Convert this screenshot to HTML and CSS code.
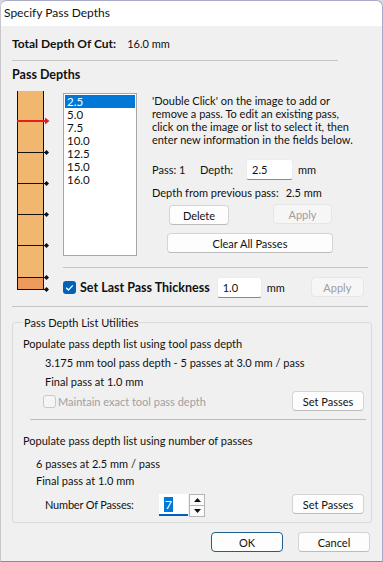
FILE: index.html
```html
<!DOCTYPE html>
<html lang="en">
  <head>
    <meta charset="UTF-8" />
    <title>Specify Pass Depths</title>
    <link rel="stylesheet" href="styles.css">
  </head>
  <body>
    <div class="window">
      <div class="titlebar">Specify Pass Depths</div>
      <div class="content">
        <div class="total">
          <span class="bold">Total Depth Of Cut:</span>
          <span class="total-val">16.0 mm</span>
        </div>
        <div class="rule rule-top"></div>
        <div class="heading bold">Pass Depths</div>

        <div class="passes">
          <svg class="ruler" width="40" height="202" viewBox="0 0 40 202">
            <rect x="5" y="1" width="27" height="186" fill="#f2b76e" />
            <rect x="5" y="187" width="27" height="12" fill="#ed9b5c" />
            <line x1="5.5" y1="1" x2="5.5" y2="200" stroke="#111" />
            <line x1="31.5" y1="1" x2="31.5" y2="200" stroke="#111" />
            <g stroke="#111">
              <line x1="5" y1="62.5" x2="34" y2="62.5" />
              <line x1="5" y1="93.5" x2="34" y2="93.5" />
              <line x1="5" y1="124.5" x2="34" y2="124.5" />
              <line x1="5" y1="155.5" x2="34" y2="155.5" />
              <line x1="5" y1="187.5" x2="34" y2="187.5" />
              <line x1="5" y1="199.5" x2="34" y2="199.5" />
            </g>
            <g fill="#111">
              <polygon points="32,62.5 34.5,60 37,62.5 34.5,65" />
              <polygon points="32,93.5 34.5,91 37,93.5 34.5,96" />
              <polygon points="32,124.5 34.5,122 37,124.5 34.5,127" />
              <polygon points="32,155.5 34.5,153 37,155.5 34.5,158" />
              <polygon points="32,187.5 34.5,185 37,187.5 34.5,190" />
              <polygon points="32,199.5 34.5,197 37,199.5 34.5,202" />
            </g>
            <rect x="5" y="30" width="29" height="2" fill="#e3201b" />
            <polygon points="33,27.5 37.5,31 33,34.5" fill="#e3201b" />
          </svg>

          <div class="pass-main">
            <div class="pass-top">
              <ul class="listbox">
                <li class="sel">2.5</li>
                <li>5.0</li>
                <li>7.5</li>
                <li>10.0</li>
                <li>12.5</li>
                <li>15.0</li>
                <li>16.0</li>
              </ul>
              <div class="editor">
                <p class="hint">
                  'Double Click' on the image to add or<br>
                  remove a pass. To edit an existing pass,<br>
                  click on the image or list to select it, then<br>
                  enter new information in the fields below.
                </p>
                <div class="pass-row">
                  <span class="pass-no">Pass: 1</span>
                  <span class="depth-lbl">Depth:</span>
                  <div class="field depth-field">2.5</div>
                  <span class="unit">mm</span>
                </div>
                <div class="prev-row">Depth from previous pass:<span class="prev-val">2.5 mm</span></div>
                <div class="btn-row">
                  <button class="btn btn-delete">Delete</button>
                  <button class="btn btn-apply" disabled>Apply</button>
                </div>
                <button class="btn btn-clear">Clear All Passes</button>
              </div>
            </div>
            <div class="rule rule-inner"></div>
            <div class="last-row">
              <span class="check on">
                <svg width="13" height="13" viewBox="0 0 13 13">
                  <path d="M3.2 6.8 L5.4 9 L9.8 4.4" fill="none" stroke="#fff" stroke-width="1.3" />
                </svg>
              </span>
              <span class="bold last-lbl">Set Last Pass Thickness</span>
              <div class="field last-field">1.0</div>
              <span class="unit">mm</span>
              <button class="btn btn-apply2" disabled>Apply</button>
            </div>
          </div>
        </div>

        <div class="rule rule-mid"></div>

        <fieldset class="group">
          <legend>Pass Depth List Utilities</legend>
          <div class="line g1">Populate pass depth list using tool pass depth</div>
          <div class="line g2">3.175 mm tool pass depth - 5 passes at 3.0 mm / pass</div>
          <div class="line g3">Final pass at 1.0 mm</div>
          <div class="tool-row">
            <label class="maintain"><span class="check off"></span>Maintain exact tool pass depth</label>
            <button class="btn btn-set">Set Passes</button>
          </div>
          <div class="rule rule-group"></div>
          <div class="line g4">Populate pass depth list using number of passes</div>
          <div class="line g5">6 passes at 2.5 mm / pass</div>
          <div class="line g6">Final pass at 1.0 mm</div>
          <div class="num-row">
            <span class="num-lbl">Number Of Passes:</span>
            <div class="spin-field"><span class="selected">7</span></div>
            <div class="spin">
              <span class="spin-btn">
                <svg width="7" height="4" viewBox="0 0 7 4"><polygon points="0,4 3.5,0 7,4" fill="#111" /></svg>
              </span>
              <span class="spin-btn">
                <svg width="7" height="4" viewBox="0 0 7 4"><polygon points="0,0 3.5,4 7,0" fill="#111" /></svg>
              </span>
            </div>
            <button class="btn btn-set">Set Passes</button>
          </div>
        </fieldset>

        <div class="footer">
          <button class="btn btn-ok">OK</button>
          <button class="btn btn-cancel">Cancel</button>
        </div>
      </div>
    </div>
  </body>
</html>
```

FILE: styles.css
```css
html,
body {
  margin: 0;
  padding: 0;
  height: 100%;
  background: #d8d8dc;
  font-family: "Segoe UI", Lato, "Liberation Sans", sans-serif;
  font-size: 11px;
  color: #111;
}

.window {
  box-sizing: border-box;
  width: 383px;
  height: 562px;
  background: #f0f0f0;
  border: 1px solid #a9a9c9;
  border-left-color: #c6c6cc;
  border-bottom-color: #8c8c8c;
  border-radius: 7px 7px 0 0;
  overflow: hidden;
}

.titlebar {
  height: 25px;
  line-height: 24px;
  padding-left: 3px;
  background: #fff;
  font-size: 12px;
}

.content {
  padding: 0 10px 0 11px;
}

.bold {
  font-weight: bold;
  font-size: 12.5px;
}

.total {
  margin-top: 11px;
  line-height: 13px;
  display: flex;
  align-items: baseline;
}

.total .bold {
  font-size: 12px;
}

.total-val {
  margin-left: 11px;
}

.rule {
  height: 1px;
  background: #c4c4c4;
}

.rule-top {
  margin-top: 10px;
  margin-right: 34px;
}

.heading {
  margin-top: 7px;
  line-height: 13px;
}

/* pass list + ruler image */
.passes {
  display: flex;
  margin-top: 9px;
}

.ruler {
  display: block;
  flex: none;
}

.pass-main {
  margin-left: 11px;
  width: 305px;
}

.pass-top {
  display: flex;
  align-items: flex-start;
}

.listbox {
  box-sizing: border-box;
  list-style: none;
  margin: 3px 0 0;
  padding: 1px;
  width: 74px;
  height: 163px;
  background: #fff;
  border: 1px solid #a8a8a8;
  flex: none;
  font-size: 11.5px;
}

.listbox li {
  height: 13px;
  line-height: 13px;
  padding-left: 2px;
}

.listbox .sel {
  background: #0078d7;
  color: #fff;
}

.editor {
  margin-left: 15px;
  margin-top: 4px;
}

.hint {
  margin: 0;
  line-height: 13px;
  white-space: nowrap;
}

.pass-row {
  display: flex;
  align-items: center;
  height: 21px;
  margin-top: 13px;
}

.pass-no {
  width: 48px;
}

.depth-lbl {
  width: 46px;
}

.field {
  box-sizing: border-box;
  height: 21px;
  line-height: 20px;
  background: #fff;
  border: 1px solid #ececec;
  border-bottom-color: #8a8a8a;
  border-radius: 3px;
  padding-left: 5px;
}

.depth-field {
  width: 47px;
}

.unit {
  margin-left: 5px;
}

.prev-row {
  margin-top: 6px;
  line-height: 13px;
}

.prev-val {
  margin-left: 7px;
}

.btn {
  box-sizing: border-box;
  height: 20px;
  padding: 0;
  font: inherit;
  color: #111;
  background: #fdfdfd;
  border: 1px solid #d4d4d4;
  border-bottom-color: #bcbcbc;
  border-radius: 4px;
}

.btn:disabled {
  color: #9d9d9d;
  background: #f6f6f6;
  border-color: #e6e6e6;
}

.btn-row {
  display: flex;
  margin-top: 6px;
}

.btn-delete {
  width: 60px;
  margin-left: 17px;
}

.btn-apply {
  width: 59px;
  margin-left: 44px;
  margin-top: -1px;
}

.btn-clear {
  display: block;
  width: 166px;
  margin: 8px 0 0 15px;
}

.rule-inner {
  margin-top: 11px;
}

.last-row {
  display: flex;
  align-items: center;
  height: 20px;
  margin-top: 9px;
}

.check {
  box-sizing: border-box;
  display: inline-block;
  width: 13px;
  height: 13px;
  border-radius: 3px;
  flex: none;
}

.check svg {
  display: block;
}

.check.on {
  background: #0063b8;
}

.check.off {
  border: 1px solid #c9c9c9;
  background: #f5f5f5;
}

.last-lbl {
  margin-left: 4px;
}

.last-field {
  width: 45px;
  margin-left: 7px;
}

.btn-apply2 {
  width: 53px;
  margin-left: 26px;
}

.rule-mid {
  margin-top: 9px;
  margin-right: 4px;
}

/* utilities group */
.group {
  margin: 9px 0 0;
  padding: 0 7px 5px 10px;
  border: 1px solid #dadada;
  border-radius: 3px;
}

.group legend {
  padding: 0 1px;
  line-height: 13px;
}

.line {
  line-height: 13px;
}

.g1 {
  margin-top: 8px;
}

.g2 {
  margin-top: 6px;
  padding-left: 22px;
}

.g3 {
  margin-top: 6px;
  padding-left: 22px;
}

.tool-row {
  display: flex;
  align-items: center;
  justify-content: space-between;
  margin-top: 3px;
}

.maintain {
  display: flex;
  align-items: center;
  padding-left: 20px;
  color: #a0a0a0;
}

.maintain .check {
  margin-right: 2px;
}

.btn-set {
  width: 72px;
}

.rule-group {
  margin: 8px -2px 0 7px;
  background: #bdbdbd;
}

.g4 {
  margin-top: 14px;
}

.g5 {
  margin-top: 10px;
  padding-left: 13px;
}

.g6 {
  margin-top: 4px;
  padding-left: 13px;
}

.num-row {
  display: flex;
  align-items: flex-start;
  margin-top: 7px;
}

.num-lbl {
  width: 114px;
  padding-left: 22px;
  line-height: 22px;
  letter-spacing: -0.2px;
}

.spin-field {
  box-sizing: border-box;
  width: 29px;
  height: 22px;
  background: #fff;
  border-bottom: 2px solid #005fb8;
  padding: 3px 0 0 5px;
  line-height: 15px;
  font-size: 12px;
}

.selected {
  display: inline-block;
  background: #0078d7;
  color: #fff;
  padding: 0 1px;
}

.spin {
  display: flex;
  flex-direction: column;
  margin-left: 1px;
}

.spin-btn {
  box-sizing: border-box;
  display: flex;
  align-items: center;
  justify-content: center;
  width: 16px;
  height: 11.5px;
  border: 1px solid #b5b5b5;
  background: #fbfbfb;
}

.spin-btn + .spin-btn {
  border-top: none;
}

.spin-btn svg {
  display: block;
}

.num-row .btn-set {
  margin-left: auto;
}

.footer {
  display: flex;
  justify-content: flex-end;
  gap: 15px;
  margin-top: 9px;
  padding-right: 2px;
}

.btn-ok,
.btn-cancel {
  width: 72px;
}

.btn-ok {
  border-color: #1f5f8a;
}
```
